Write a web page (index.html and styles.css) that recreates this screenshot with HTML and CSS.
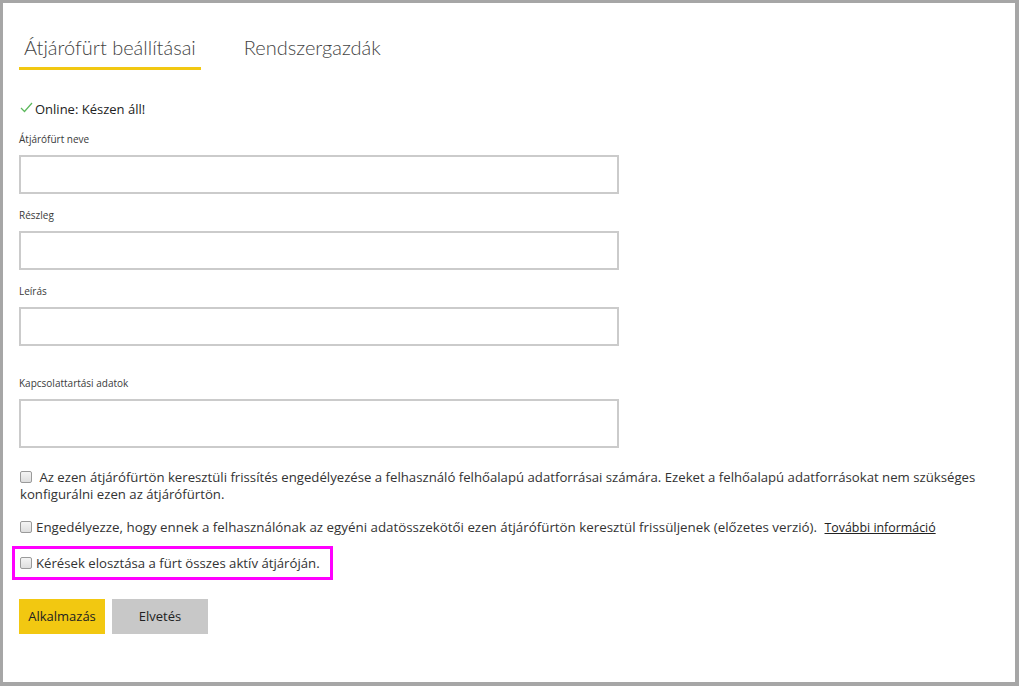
FILE: index.html
```html
<!DOCTYPE html>
<html lang="hu">
<head>
<meta charset="utf-8">
<link rel="stylesheet" href="styles.css">
</head>
<body>
<div class="frame">
  <div class="tabs">
    <div class="tab active">Átjárófürt beállításai</div>
    <div class="tab">Rendszergazdák</div>
  </div>
  <div class="status">
    <svg class="check" width="13" height="11" viewBox="0 0 13 11"><path d="M1 6 L4.5 9.5 L12 1" fill="none" stroke="#5cb85c" stroke-width="1.2"/></svg>
    <span>Online: Készen áll!</span>
  </div>
  <div class="field">
    <div class="label">Átjárófürt neve</div>
    <div class="input"></div>
  </div>
  <div class="field">
    <div class="label">Részleg</div>
    <div class="input"></div>
  </div>
  <div class="field">
    <div class="label">Leírás</div>
    <div class="input"></div>
  </div>
  <div class="field last">
    <div class="label">Kapcsolattartási adatok</div>
    <div class="input tall"></div>
  </div>
  <div class="opt opt1">
    <span class="cb"></span>&nbsp;Az ezen átjárófürtön keresztüli frissítés engedélyezése a felhasználó felhőalapú adatforrásai számára. Ezeket a felhőalapú adatforrásokat nem szükséges konfigurálni ezen az átjárófürtön.
  </div>
  <div class="opt opt2">
    <span class="cb"></span>Engedélyezze, hogy ennek a felhasználónak az egyéni adatösszekötői ezen átjárófürtön keresztül frissüljenek (előzetes verzió). <a class="link">További információ</a>
  </div>
  <div class="highlight">
    <div class="opt opt3"><span class="cb"></span>Kérések elosztása a fürt összes aktív átjáróján.</div>
  </div>
  <div class="buttons">
    <div class="btn primary">Alkalmazás</div>
    <div class="btn secondary">Elvetés</div>
  </div>
</div>
</body>
</html>
```
FILE: styles.css
```css
html, body {
  margin: 0;
  padding: 0;
  background: #fff;
}
body {
  font-family: "Open Sans", "Noto Sans", sans-serif;
  color: #333;
}
.frame {
  box-sizing: border-box;
  width: 1019px;
  height: 686px;
  border-style: solid;
  border-color: #a6a6a6;
  border-width: 3px 4px 4px 3px;
  padding: 0 0 0 16px;
  overflow: hidden;
}
.tabs {
  display: flex;
  gap: 38px;
  margin-top: 33px;
}
.tab {
  font-family: "Lato", "Open Sans", sans-serif;
  font-size: 20px;
  font-weight: 300;
  color: #444;
  padding: 0 5px;
  height: 31px;
  line-height: 23px;
  border-bottom: 3px solid transparent;
}
.tab.active {
  border-bottom-color: #f2c811;
}
.status {
  display: flex;
  align-items: center;
  gap: 2px;
  margin-top: 30px;
  margin-left: 1px;
  font-size: 13px;
  color: #222;
  height: 18px;
}
.check {
  margin-top: -4px;
}
.label {
  font-size: 10px;
  color: #3a3a3a;
  height: 20px;
  line-height: 20px;
  margin-top: 11px;
  margin-bottom: 6px;
}
.status + .field .label {
  margin-top: 11px;
}
.field.last .label {
  margin-top: 27px;
}
.input {
  box-sizing: border-box;
  width: 600px;
  height: 39px;
  border: 2px solid #cbcbcb;
}
.input.tall {
  height: 49px;
}
.opt {
  font-size: 13.2px;
  line-height: 17px;
  color: #333;
}
.opt1 {
  margin-top: 21px;
  margin-left: 1px;
  width: 975px;
}
.opt2 {
  margin-top: 16px;
  margin-left: 1px;
  font-size: 13.35px;
}
.cb {
  display: inline-block;
  box-sizing: border-box;
  width: 12px;
  height: 12px;
  border: 1px solid #9a9a9a;
  border-radius: 2px;
  background: linear-gradient(#f4f4f4, #dedede);
  vertical-align: -1px;
  margin-right: 4px;
}
.link {
  color: #222;
  font-size: 12.4px;
  text-decoration: underline;
  margin-left: 4px;
}
.highlight {
  box-sizing: border-box;
  width: 321px;
  height: 34px;
  border: 3px solid #ff00ff;
  margin-top: 10px;
  margin-left: -7px;
  padding: 6px 0 0 5px;
}
.buttons {
  display: flex;
  gap: 7px;
  margin-top: 19px;
}
.btn {
  height: 35px;
  line-height: 35px;
  font-size: 13px;
  color: #222;
  text-align: center;
}
.primary {
  width: 86px;
  background: #f2c811;
}
.secondary {
  width: 96px;
  background: #c8c8c8;
}
```
